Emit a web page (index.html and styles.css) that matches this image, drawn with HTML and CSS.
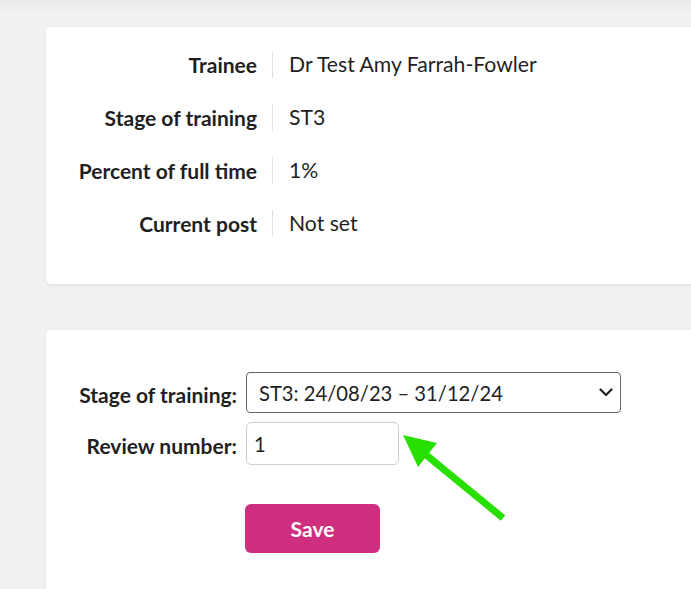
FILE: index.html
```html
<!DOCTYPE html>
<html lang="en">
<head>
<meta charset="utf-8">
<title>Review</title>
<link rel="stylesheet" href="styles.css">
</head>
<body>
<div class="page">
  <section class="card info-card">
    <dl class="info">
      <div class="info-row"><dt>Trainee</dt><dd>Dr Test Amy Farrah-Fowler</dd></div>
      <div class="info-row"><dt>Stage of training</dt><dd>ST3</dd></div>
      <div class="info-row"><dt>Percent of full time</dt><dd>1%</dd></div>
      <div class="info-row"><dt>Current post</dt><dd>Not set</dd></div>
    </dl>
  </section>

  <section class="card form-card">
    <form class="form">
      <div class="form-row">
        <label class="form-label" for="stage">Stage of training:</label>
        <div class="select-wrap">
          <select id="stage" class="select">
            <option>ST3: 24/08/23 – 31/12/24</option>
          </select>
          <svg class="chevron" width="14" height="9" viewBox="0 0 14 9" aria-hidden="true">
            <path d="M1.5 1.5 L7 7 L12.5 1.5" fill="none" stroke="#222" stroke-width="2.2" stroke-linecap="round" stroke-linejoin="round"/>
          </svg>
        </div>
      </div>
      <div class="form-row">
        <label class="form-label" for="review">Review number:</label>
        <input id="review" class="input" type="text" value="1">
      </div>
      <div class="form-actions">
        <button type="button" class="btn-save">Save</button>
      </div>
    </form>
    <svg class="annotation" width="120" height="100" viewBox="0 0 120 100" aria-hidden="true">
      <line x1="108" y1="96" x2="30" y2="32" stroke="#28e000" stroke-width="7"/>
      <polygon points="8,13 42,21 23,45" fill="#28e000"/>
    </svg>
  </section>
</div>
</body>
</html>
```

FILE: styles.css
```css
* { box-sizing: border-box; }

html, body {
  margin: 0;
  padding: 0;
  background: #f2f1ef;
  overflow: hidden;
}

body {
  font-family: Lato, "Open Sans", sans-serif;
  color: #1f1f1f;
  background: linear-gradient(#ebeae8 0, #f2f1ef 14px) #f2f1ef;
  height: 589px;
}

.page {
  padding: 27px 0 0 46px;
  display: flex;
  flex-direction: column;
  gap: 46px;
}

.card {
  background: #fff;
  border-radius: 5px 0 0 5px;
  box-shadow: 0 1px 3px rgba(0, 0, 0, 0.08);
  margin-right: -20px;
}

.info-card {
  height: 257px;
  padding: 24px 0 0 0;
}

.info {
  margin: 0;
  display: flex;
  flex-direction: column;
  gap: 26px;
}

.info-row {
  display: grid;
  grid-template-columns: 211px 1fr;
  column-gap: 15px;
  height: 27px;
  align-items: center;
}

.info-row dt {
  font-weight: 700;
  font-size: 21px;
  text-align: right;
  line-height: 27px;
}

.info-row dd {
  margin: 0;
  font-size: 21.2px;
  line-height: 27px;
  border-left: 1px solid #e2e2e2;
  padding-left: 16px;
}

.form-card {
  position: relative;
  height: 280px;
  padding-top: 42px;
}

.form {
  display: flex;
  flex-direction: column;
  gap: 9px;
}

.form-row {
  display: flex;
  align-items: center;
  gap: 9px;
}

.form-label {
  width: 191px;
  text-align: right;
  font-weight: 700;
  font-size: 21px;
  padding-top: 4px;
}

.select-wrap {
  position: relative;
  width: 375px;
}

.select {
  appearance: none;
  -webkit-appearance: none;
  width: 100%;
  height: 41px;
  border: 1px solid #666;
  border-radius: 4px;
  background: #fff;
  font-family: Lato, sans-serif;
  font-size: 20.2px;
  color: #1f1f1f;
  padding: 0 0 0 12px;
}

.chevron {
  position: absolute;
  right: 8px;
  top: 16px;
}

.input {
  width: 153px;
  height: 43px;
  border: 1px solid #cfcfcf;
  border-radius: 5px;
  font-family: Lato, sans-serif;
  font-size: 20.2px;
  color: #1f1f1f;
  padding: 0 0 0 7px;
}

.form-actions {
  padding: 30px 0 0 199px;
}

.btn-save {
  width: 135px;
  height: 49px;
  border: 0;
  border-radius: 6px;
  background: #cf2e7e;
  color: #fff;
  font-family: Lato, sans-serif;
  font-weight: 700;
  font-size: 21px;
}

.annotation {
  position: absolute;
  left: 349px;
  top: 92px;
}
```
